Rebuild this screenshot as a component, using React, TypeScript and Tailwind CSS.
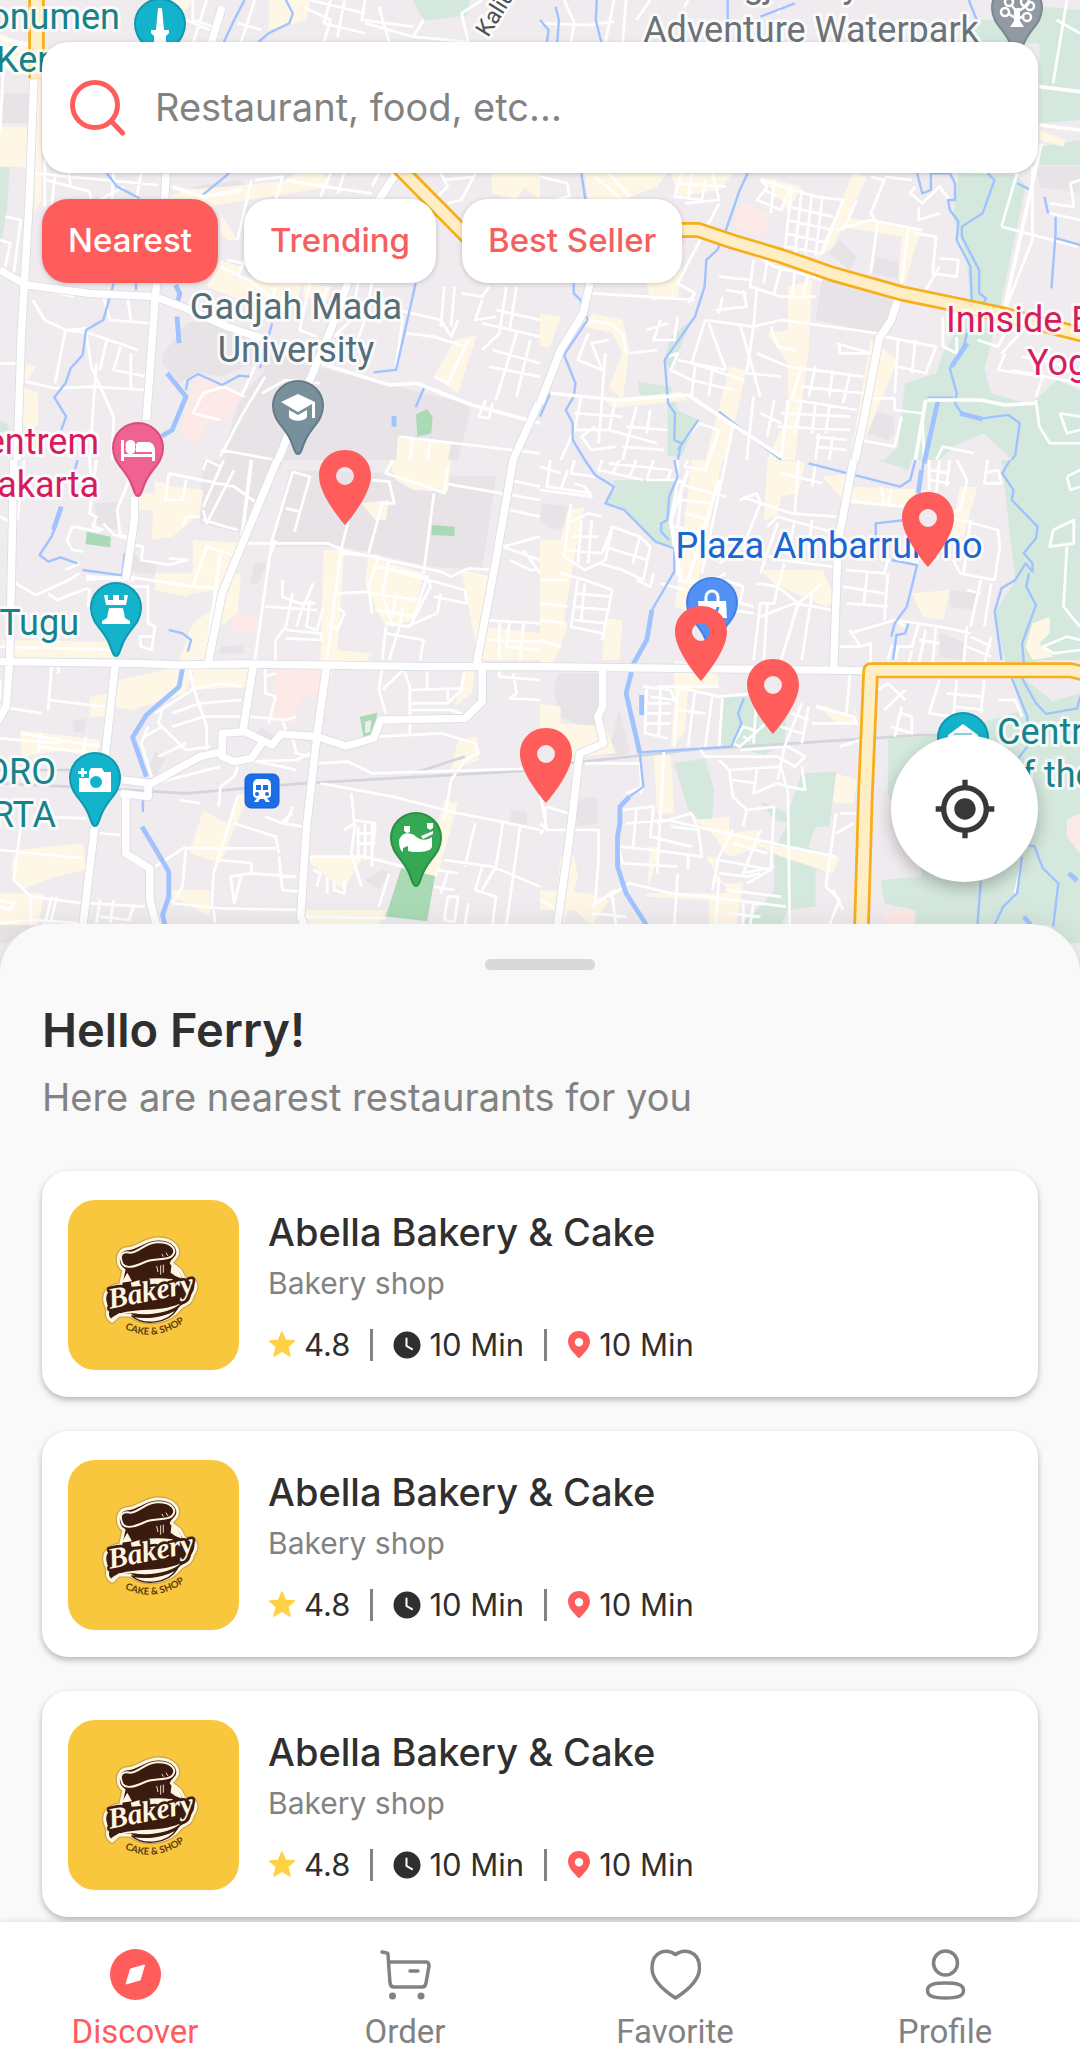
import { useState } from "react";
import { MdMyLocation } from "react-icons/md";

type Tile = {
  transform: string;
  green: string;
  grey: string;
  pink: string;
  park: string;
  cream: string;
  minor: string;
  street: string;
  road: string;
  water: string;
  river: string;
  rail: string;
  highway: string;
};

const TILES: Tile[] = [
  {
    transform: "scale(0.3444 0.3333)",
    green: "M0 500L28 495L20 640L0 740ZM1200 0H1365L1358 45L1235 62L1215 35ZM0 1260L25 1275V1290L0 1300Z",
    grey: "M540 970L620 960L720 1020L920 1100L1370 1215L1330 1380H640L700 1190L770 1110L740 1090L640 1130L570 1115L520 1150L470 1090L475 1060ZM0 280H90V370H0ZM560 560L690 540L720 560L600 600Z",
    pink: "M575 1130L700 1175V1190L665 1260L600 1270L580 1330L525 1310L545 1200Z",
    park: "M1208 1243L1240 1228L1256 1250L1252 1300L1212 1310Z",
    cream:
      "M0 380H85V500H0ZM490 590L540 570L820 545L860 520H940L960 560L600 620L490 640ZM640 780L700 800L680 830L880 840L860 920L700 900L600 860ZM780 0H900L890 60L780 90ZM0 100L60 130L130 150L122 240L0 200ZM1425 520H1568V600L1520 560L1500 600L1430 580ZM1500 690L1568 740V840L1520 820ZM1320 1020L1385 1005L1330 1180L1260 1130ZM75 1090L105 1100L65 1160L110 1180V1280H60ZM1155 1310L1310 1330L1300 1380H1150ZM450 0H560L520 60L470 40ZM640 640L690 720H660L640 700ZM100 240H120V600L100 640ZM880 850L960 860L950 900L880 890Z",
    minor:
      "M100 520L460 555M130 480V620M135 540L260 575L270 640M160 520L150 620M200 520L205 560M330 520L325 600M410 520L395 600M360 560L290 600M15 650L60 660L40 820M0 720L30 730L15 800M10 200L0 400M95 900L130 960L190 990L260 1000L400 1050M215 890L130 870M190 990L160 1150M75 1145L160 1165L270 1160L420 1170M250 1000L265 1100L330 1250L325 1380M300 890L320 960L440 970M310 1020L290 1110M370 890L380 960M350 1040L330 1110L430 1130M0 1090H60M380 1170V1060M540 60L610 90M560 130L600 0M560 0V60L620 80M690 70L760 90M740 0L700 126M880 20L960 60L940 126M900 0L1060 40M960 0L940 70L1060 100M1000 0L980 110M1060 0L1050 60L1200 80M1100 20L1130 126M1060 70L1200 110L1230 60M1200 110L1360 126M1400 0L1340 40L1360 126M730 540L690 720M740 540L820 530L800 600M830 540L940 560L1080 580M960 520L930 590M1000 520L980 580M1100 520L1080 560M1280 520L1300 560L1260 600M1290 540L1380 530M1380 520L1340 600L1300 610M640 800L720 840L800 900M720 760L690 830M660 780L760 800M800 860L780 940M900 850L870 990L920 1010M950 860L930 940M1040 850L1020 960L970 1010M1060 900H1110L1100 970M1080 850L1060 960L1030 1040M1110 920L1280 960L1310 1010L1330 960M1180 1000L1260 1010L1350 1040M1170 950L1150 1100M1290 860L1280 980M1320 860L1310 980M1340 880L1400 890L1420 860M1400 900L1380 960L1440 950M1470 860L1450 1000L1400 1050M1500 860L1480 990M1440 930L1568 960M1400 970L1568 1010M1500 1000L1440 1200M1540 1020L1500 1190M1430 1050L1568 1090M1420 1100L1568 1130M1360 1020L1300 1150L1260 1130M1410 1200L1390 1250L1420 1255L1430 1210M700 1190L740 1100M770 1130L700 1250L640 1370M560 1240L590 1180L650 1160L710 1190M560 1240L640 1260M640 1350L800 1380M760 1180L830 1140L930 1150M1160 1310L1568 1360M1200 1310L1190 1380M1250 1320L1240 1380M280 1090L260 1380M190 990L250 985",
    street: "M930 1090L1130 1155L1210 1150L1370 1215L1568 1270M500 560L590 590L700 570M0 115L130 145",
    road: "M98 240L85 600L62 1000L50 1380M0 810L75 855L260 880L450 890L540 925L660 980L760 1015M482 520L478 600M455 850L450 900L425 1260M1150 520L1100 600M1010 850L960 990L900 1140L800 1400M645 20L610 140M1568 1200L1485 1390",
    water:
      "M710 0L680 60L650 126M830 0L850 40L840 70L780 100L750 126M310 520L340 560L405 595M665 520L580 592M330 850L300 960L250 990L240 1065L205 1105L190 1150L158 1192L192 1250L178 1290M1207 850L1150 1110L1085 1117M1232 1162L1207 1222M540 1170L545 1140L575 1122L645 1155L695 1127L725 1130M790 970L755 1105M395 850V870",
    river: "M510 855L522 880L515 910M514 950L520 1030M485 1120L540 1190L500 1290L470 1308M1144 1248V1280",
    rail: "",
    highway: "M106 -10V235M1160 505L1380 735",
  },
  {
    transform: "translate(540 0) scale(0.3444 0.3333)",
    green:
      "M1260 60H1440L1460 20L1568 30V360L1450 370V130L1260 126ZM1215 520L1385 525L1410 560L1340 900L1290 1110L1310 1180L1410 1210L1440 1200L1500 1140L1568 1170V1380H1370L1290 1300L1200 1340L1160 1380H1000L1040 1340L1060 1150L1150 1120L1170 1060L1250 920L1240 780L1200 650ZM1450 440L1568 420V495H1450ZM440 960L380 1110L360 1080L380 1010ZM285 1145L380 1160L400 1230L460 1260L410 1370H370V1200L290 1185Z",
    grey: "M820 835L1040 890L1000 1005L800 960ZM870 720L920 770L900 810L840 760ZM975 770L1050 790L1045 840L965 820ZM950 1225L1025 1250L1030 1300L1010 1320L945 1300ZM1440 500H1568V580L1450 560Z",
    pink: "M590 605L665 645L650 710L555 680Z",
    park: "",
    cream:
      "M130 520H370L340 560L240 600H140ZM380 520H560L520 570L400 590ZM310 850L420 730L400 900H320ZM150 940L240 960L260 1050L240 1200L200 1160L240 1060L210 1000L130 980ZM190 1200L410 1175L430 1200L210 1225ZM910 520L950 530L900 640L850 740L800 780ZM880 650L1110 690L1090 740L1060 850L1040 840L1050 710L870 680ZM720 860L790 840L780 1050L740 1380H660L720 1240V1090L660 1000L720 990ZM550 1100L600 1110L540 1380H480ZM960 1020L1040 1080L1030 1100L920 1380H900ZM1450 390L1525 420L1520 440L1450 420ZM0 940L60 950L30 1040H0ZM640 530L760 560L720 640L700 600Z",
    minor:
      "M0 70L140 75L215 65M70 0L100 70L90 126M215 0L190 126M250 0L240 126M320 0L280 60M430 0L420 20M700 20L690 40M0 530L80 550L85 590L40 600M160 530L240 600M200 520L260 590M410 520L390 590L470 600L480 540M400 550L540 560M440 520L430 600M500 520L520 600L420 610M520 610L400 850M640 540L660 560L630 600L700 630L730 560M650 570L690 590M680 540L670 640M640 540L800 590L880 600M730 570L710 760M760 570L740 760M790 580L770 760M820 590L800 770M720 620L850 650M715 660L850 690M712 700L840 730M712 740L820 760M880 600L820 760M860 690L960 660L1110 690M920 600L880 690M960 530L1000 540L960 640L980 670L960 820M1000 530L1080 540M1090 560L1075 580L1110 610L1160 560L1190 600M1100 620V660L1160 640M1070 680L1050 850M1090 700L1150 710L1140 820L1210 830L1215 780L1160 775M1120 870L1160 800M600 750L680 800L790 830L820 840M620 780L610 860L700 890L800 890M660 780L650 850M700 800L680 880M740 820L730 900M780 820L760 900M520 830L610 840M540 870L600 880M510 930L600 920L590 870M530 890L520 940M150 880L310 890L450 900M400 850L450 880L430 910M350 960L330 1020L390 1020L400 950M310 990L370 970M480 960L440 1090L530 1120L590 1140M480 960L620 980L700 960L980 1000M490 970L540 1110M580 970L640 1190M620 980L600 1120L700 1130M630 860L620 980M670 980L690 1040L740 1050M630 1060L720 1100L940 1130M760 1100L730 1200M800 1100L780 1190M850 1110L840 1190M900 1120L880 1210M760 1160L940 1180M740 1200L920 1230M860 1030L960 1060L870 1060V1030M1000 1010L1150 1040L1120 1120L1040 1100M1040 1020L1030 1180M1090 1020L1080 1120M1170 950V1040L1210 1060V1010M1270 1020L1330 1040L1350 1000M1350 1060L1330 1110L1460 1130L1440 1190M1400 1070L1540 1100M1370 1110L1568 1150M1440 950L1340 1060M140 1000L110 1080L180 1110L150 1030L200 1020M190 1060L180 1190M260 1060L340 1050M250 1060L240 1000L200 970L130 960M370 1070L400 1060L380 1110L440 1140L560 1170M400 1080L540 1110M450 1100L440 1190M500 1110L490 1190M120 1190L100 1290L60 1380M180 1200L170 1330M220 1200L200 1290L340 1330M100 1240L240 1250M100 1290L200 1290M160 1280L120 1310L150 1350L220 1340M280 1220L240 1380M320 1230L310 1300M250 1280L370 1290M240 1340L360 1350M420 1320L460 1270L520 1290L490 1380M560 1280L540 1380M620 1190L600 1380M680 1200L660 1310M720 1200L700 1380M640 1240L700 1270M760 1200L740 1300M800 1210L790 1300M840 1220L830 1300M700 1240L900 1250M690 1280L900 1290M800 1310L890 1320M800 1340L890 1350M800 1380L810 1300M840 1380L850 1310M1030 1195H960M1030 1195V1230L1110 1240L1115 1380M1050 1250L1030 1340L930 1320M1340 680L1560 740M1385 520L1340 680M1430 500L1430 720L1350 930M1568 540L1540 550L1550 620L1480 610M1568 660L1480 640M1440 1200L1450 1280L1480 1330H1568M1510 1240L1530 1300L1568 1290M1510 1240L1568 1250M1150 1380L1170 1340L1260 1360M1490 250L1530 0M1500 60L1568 100",
    street: "M1450 260L1568 275M1450 375L1568 390M1455 430L1350 920M1120 1200L1090 1380M30 1180L230 1200L430 1185L700 1370M1125 1200L1280 1200L1350 1215L1440 1210",
    road: "M145 850L125 940L60 1050L0 1210M1040 895L1020 960L985 1015L960 1150L940 1260L913 1390",
    water:
      "M0 60L25 90L20 126M45 20L55 60L50 126M165 0L162 60L178 126M545 0V126M740 10L640 50M1245 0L1268 60L1230 110M120 520L132 600M603 520L580 570L540 690L515 750L483 780L478 860L450 950L362 1080L372 1210L392 1240L390 1320L410 1330L400 1380M460 1260L400 1350M98 850V880L118 900L138 960L70 1065L103 1150L98 1190L75 1230L95 1270V1320L130 1380M0 1250L30 1180M520 1235L700 1380M1095 520L1110 580L1135 570V520H1190L1205 550V600H1185L1190 630L1215 665L1210 720L1250 800L1255 940L1230 1040L1190 1105L1210 1180L1205 1210L1230 1250M1285 1255L1360 1245L1393 1270L1380 1365L1370 1380M1300 520L1320 540L1285 640L1225 680V710L1275 810V880L1295 895L1280 930M1385 550L1425 570M1465 590L1475 640M1497 650V700L1485 865M1500 715L1568 735M1125 1193H1200",
    river: "M1155 1205L1115 1390M1220 1240L1285 1258M1240 1030L1195 1100",
    rail: "",
    highway: "M360 690L460 690L560 725L700 768L850 822L1050 880L1330 940L1580 1005",
  },
  {
    transform: "translate(0 460) scale(0.3444 0.3333)",
    green: "",
    grey: "M590 0H790L700 220L580 190ZM840 30L1440 50L1400 330L1250 320L1000 260H790ZM275 130L345 125L340 210L280 190ZM385 280L455 320L450 345L385 335ZM740 305L775 310L750 370L725 375ZM640 560L710 555V580H635ZM210 780L250 775L245 820L215 815ZM1485 1050L1530 1055V1095L1480 1090ZM1060 1260L1110 1230L1130 1240L1100 1290ZM450 870L480 900L450 950L430 930ZM760 800L800 830L780 850L740 830ZM0 1390H110L20 1450H0Z",
    pink: "M680 458L750 470L745 525L670 505ZM800 628H935L925 715L870 710L860 790L780 780L800 700L790 690Z",
    park: "M252 215L322 230L320 262L248 252ZM1255 195L1320 200V228L1252 225ZM1165 1225L1263 1248L1240 1384L1120 1370ZM1045 770L1095 758L1085 830H1055ZM1060 785V820L1075 815L1078 780Z",
    cream:
      "M450 60L500 80L590 90L580 160L500 230L440 240L445 150L390 150V100H450ZM560 240L720 250L640 390L560 400L540 410L450 390V340H560ZM650 340L700 340L690 460L640 500L600 600H520L560 490L640 430ZM0 540L330 545V600H40ZM940 270H1000L980 570L1080 580L1060 610H930ZM1070 290L1230 340L1200 480L1120 500L1080 420L1060 370ZM1130 0H1310L1300 95L1200 90L1150 60ZM1340 330L1430 350L1400 500L1568 520V600H1390ZM345 660L520 620L560 630L540 700L380 750L330 740ZM560 620H720L715 680L560 690ZM60 810L290 840L280 900L190 870L60 890ZM260 710L320 700L310 770H260ZM590 1050L660 1090L690 1000L720 1010L640 1210L550 1180ZM50 1170L240 1150L250 1230L160 1250L60 1290L30 1220ZM1290 1020L1330 1030L1270 1250H1230ZM900 1100V1190H1060L1030 1230L1000 1290L900 1210ZM890 1350H1120L1100 1395H880ZM500 1290H610V1370L500 1310ZM0 1300H130L110 1395H0ZM1330 840L1385 830L1390 900L1310 930ZM940 620H965L930 830H915ZM1350 620H1380L1370 700L1320 740ZM1050 130L1130 120L1120 180H1090Z",
    minor:
      "M0 170L40 190M70 0L50 180M280 0L260 160L280 170L270 200L300 210M350 0L375 60L340 150L350 230L375 235M300 190L330 225L380 230M210 200L195 240L210 270L240 275M210 200L290 215M260 0L270 120M490 40L680 80L740 125M490 40L480 120L530 120L540 60M680 30L600 190L590 150M650 0L590 140M590 180L690 210M530 200L540 170L580 170M600 0L640 20L620 70M390 255L415 260L410 300L490 315L545 300L490 295M850 35L790 240L740 600M850 35L900 50L855 215M830 145L870 155M800 240L780 300M700 250H950L1010 275L1280 335L1310 350L1360 325L1440 330M1080 60L1130 65L1145 130L1110 130L1070 280M1020 150L990 270L950 600M990 280L1100 290L1090 320L1240 350L1200 480M1100 290L1070 380L1080 460M1130 300L1110 400L1140 500M1100 320L1350 390L1355 430L1260 410M1240 350L1250 380L1190 500L1120 490M1080 400L1210 420M1090 450L1210 470M1150 400L1140 470M1170 440L1160 500L1130 600M1120 500L1110 600M1180 500L1270 460M1270 460L1280 400M1120 520L1230 540L1220 600M980 400L1080 395M980 440L1000 460L980 510L950 490M820 360V410L870 430L915 430M910 370L880 440L860 500M770 440L920 450M850 400L830 500L800 540V600M900 420L890 500L920 510L940 440M830 510L930 520L935 540L830 535M1260 100L1230 340M1300 20L1290 100L1240 80L1120 40L1140 0M1290 70L1568 120M1480 60L1568 80M1480 150L1568 170M1460 260L1568 230M1460 260L1568 300M1520 270L1568 340M1480 300L1540 330L1568 330M1400 480L1568 490M1450 490V600M1480 480L1470 560L1568 570M1520 490L1510 600M1420 540L1568 545M45 370L105 405L200 360L230 340M140 400L165 420L255 385M190 330L230 310M250 360L370 350L560 380L640 385M370 380H430V490L450 500L440 570L410 560L405 530L440 530M560 380L600 260L690 290M600 0L590 30M260 385L255 440M0 560L330 570M0 660V720M150 620L140 750M0 740L120 760M145 720L300 740M60 820L290 860M0 835L180 850M120 820L110 880M250 830L240 900M110 860L270 880M170 620V640M550 620L560 680L600 800V870M550 690L640 670L700 680M560 690L450 760M470 750L460 790L540 870L610 860M500 760L580 730L700 720M500 800L590 770L700 770M430 800L410 850L440 950M420 830L470 800M460 890L540 850M770 620V700L800 710L780 790M770 650L800 640M720 770L830 780L860 770M820 780L830 810M1110 620L1100 690L1120 760M1170 620L1190 680V820M1180 620L1110 690M1190 690L1340 685M1240 620V690M1350 620L1340 690L1300 730H1195M1190 750H1310L1360 770M1300 690V720M1450 620V650L1568 660M1490 640L1500 700L1480 715L1568 720M850 830L860 880L910 890M700 905L860 900L900 880M730 900L860 930M690 920L680 950L640 980L635 1040M640 920L450 970M920 910L1010 905L1080 940L1568 925M1100 830L1280 820L1380 850L1390 880L1350 900L1310 960L1290 1080M930 970L1140 1010L1330 1060L1480 1090L1568 1110M1020 1000L1030 1100L1020 1180L1050 1280M1030 1080L1090 1090L1080 1180M1040 1100V1200M1060 1090V1200M1080 1090V1220M1035 1120H1090M1035 1150H1090M900 1190H1060L1170 1220M1000 1110L1030 1090M910 1230L930 1240L920 1280M950 1250V1300M970 1260V1290L1000 1300V1260M810 1190L820 1290L870 1295M770 1070L820 1090L880 1100M820 1085L850 1060M850 1040L830 1090M680 1090L800 1130L810 1180M520 1020L580 1030M690 1010L620 1240L615 1350M540 1165H800M540 1165L530 1280L500 1330M640 1200L730 1210V1240L670 1250L680 1330L700 1250M720 1240L860 1250M450 1220L540 1160M500 1330L640 1345L865 1350M620 1350L625 1390M0 1170L240 1195M60 1100L40 1260L90 1310L240 1330M150 1310L130 1395M165 1310L145 1395M290 1320L280 1390M330 1320L320 1390M390 1330L375 1380L290 1370M260 1330L420 1340M0 1390L90 1380L240 1390M90 1310V1395M0 1320L40 1330L30 1350L0 1340M100 1070L250 1075M290 1120L350 1125M1290 1200L1430 1220L1568 1280M1270 1230L1330 1240M1260 1280L1320 1290M1300 1240L1280 1300M1400 1220L1380 1290L1440 1310L1430 1395M1440 1220L1400 1290M1490 1250L1470 1395M1300 1310L1290 1380L1320 1385L1330 1310L1300 1310M1360 1330L1350 1395M870 1370L1120 1375M1380 1090L1350 1220M1460 1090L1440 1220M1510 1100L1490 1250M1100 1340L1130 1240",
    street: "M730 0L700 250M640 280L600 600M390 360L250 350",
    road: "M0 605L400 610L520 615L700 612L930 615L1240 620H1580M40 0L28 600L18 740L-10 790M390 110V180L365 360M335 610L305 890M275 1100L240 1400M805 0L700 260L645 400L605 605M735 620L705 815M1490 0L1440 300L1385 605L1400 625V725L1350 775L1105 780L1085 835L1005 858L920 830L815 822L790 855L710 815L645 820V890L680 905L730 895L760 850M645 875L580 890L440 970L355 960M350 1000L430 1010V970M365 1000V1180L435 1225V1320L455 1400M948 620L920 830L890 1100L873 1370L885 1400",
    water: "M180 140L150 230L115 285L140 305L175 292L225 310M240 330L355 346L362 280M490 510L530 520L555 540L545 575M415 1020V1055M225 0L215 40",
    river: "M178 140L155 210M530 625L520 680L425 765L385 832L425 950M412 1100L450 1165L490 1235V1310L472 1365L480 1400",
    rail: "M0 930H250M0 970L200 980L540 1000L880 970L1568 930M1200 940L1350 890",
    highway: "",
  },
  {
    transform: "translate(540 460) scale(0.3444 0.3333)",
    green:
      "M210 60L400 60L370 180L390 265L335 245L245 150L190 130L220 85ZM530 710L720 710L710 850L650 885L560 860H525ZM390 910L480 895L505 990L500 1080L470 1085L430 1050ZM640 1025L720 1060L760 940L860 935L840 1100H800L780 1160L850 1200L800 1230L800 1340L720 1350L700 1395H580L650 1330L680 1290L680 1170L720 1090L680 1080ZM1010 835L1160 825L1568 700V1450H1530L1480 1395H1090V1350L1000 1330L990 1260L1110 1250L1100 1200L1010 1000ZM1340 0H1568V600H1450L1400 650L1530 760L1568 740V900H1430L1410 780L1350 600L1320 460L1380 360ZM980 0H1080L1070 30Z",
    grey: "M5 130L85 140L90 190L40 210L0 180ZM50 640H180V740L165 770L185 850L200 870L230 750L260 870L240 890L130 880L100 790L60 770L40 700ZM1160 520L1240 550L1230 600L1160 590ZM1190 390L1270 400L1260 450L1190 440ZM100 1020L165 1010L170 1090L110 1100Z",
    pink: "M1000 1352L1088 1350L1080 1395H1000ZM1530 1080L1568 1060V1180L1530 1130Z",
    park: "",
    cream:
      "M80 150L130 140L110 230L70 470L80 500L40 610H0V240H60ZM440 0H530L440 460L390 440L400 380ZM660 0L770 5L750 100L700 110L690 170L650 180ZM820 50L920 40L900 80L1130 90V150L890 130ZM1220 80H1270L1230 230L1190 240ZM640 330H820L860 420L830 440L740 400L680 370ZM190 475L240 480L230 600H180ZM390 600L510 620L520 680L430 690L420 820L380 860L390 700ZM0 730L60 740V790L190 800L220 880L120 890L100 1000L90 870L0 800ZM800 730L920 770L910 720L920 790H860ZM330 880L380 890L390 1060L340 1060ZM450 1080L550 1070L550 1120L630 1110L640 1150L870 1190L850 1240L700 1190L640 1160L550 1190L530 1170L510 1130ZM320 1160L350 1160L310 1300H550L480 1190H520L500 1270H590L570 1395H490L490 1320L310 1310ZM60 1190H100L110 1250L70 1390H40ZM0 1290L140 1300L200 1320L150 1395L100 1350H0ZM860 940L920 960L910 1030H850ZM1480 470L1430 490L1410 560L1430 600L1490 590L1450 550L1480 520ZM1080 400L1190 390L1170 480L1110 470Z",
    minor:
      "M0 20L60 40M30 0L20 80L150 100M80 30L60 90M0 90L150 110L130 80L100 70M100 0L90 40L160 50M180 0L170 30L300 60M230 0L210 40M280 0L260 50M330 0L310 60M200 10L380 30M310 60L400 60L430 80L540 110M380 30L370 60M400 0V60M430 0L420 20L480 30L490 0M540 0L470 340M400 60L380 180L400 350M410 120L500 130M420 160L490 180M390 200L480 220M410 100L400 200M90 130L70 290L130 330L190 300L210 200L290 230L320 260L300 360L240 330L170 310M80 190L140 160L180 170M90 230L170 230M75 270L180 280M120 180L110 310M150 180L140 310M210 200L180 280M290 230L270 310M190 260L310 300M330 340L320 380L280 360M350 370L420 390M60 340L130 360L210 390M100 400L210 410M110 360L90 500L180 520M130 370L120 480M100 440L200 450M210 390L180 540M100 480L190 490M0 430L80 440M0 480L70 490M0 540L60 560M0 360H80M580 120L630 100L640 130L590 110M640 130L730 160L860 170M640 130L590 260L520 310M750 0L740 160M800 10L790 80M820 70L700 40M660 200L690 170L860 220M740 180L720 280M790 180L780 270M690 190L640 340M580 260L700 300L850 320M540 340L480 370L500 420M540 360L590 380L580 430M630 370L690 380L680 430L640 430L620 600M710 310L690 380L750 430L700 600M750 430L820 370M740 430L850 450M790 400L760 600M640 470L740 430M660 430L650 600M550 420L620 440M560 450L620 460M900 0L890 120L960 130L1060 140M990 80L1000 130M1020 90L1010 130M1130 0V90M1160 0L1150 100M1190 0L1180 80M1130 30L1190 40M1130 60L1190 70M1300 0L1290 70H1340L1330 30L1290 40M1210 0L1240 60L1220 150L1190 160M890 330L1000 340L1010 300L1100 310M880 380L1000 400M890 430L1010 440M950 340L940 430M1010 340L1000 480M900 520L1030 480L1160 500L1250 520M1030 480L1060 500M900 510L930 560L960 550V610M870 560H930M1190 170L1220 180L1330 210L1335 260L1320 360L1220 340L1200 300M1250 180L1230 340M1280 360L1250 500M1310 370L1290 500M1280 400L1240 390M1240 500L1230 610M1310 530L1290 610M1250 530L1310 560M1240 560L1310 590M1100 490L1080 560L1020 560L1010 600M1040 560L1030 600M1080 570L1070 610M1120 510L1100 610M1150 500L1140 610M1100 540L1160 550M300 680L380 690L390 720L320 710M310 680L305 820L370 835M350 690L345 830M310 730H380M310 760H380M310 790H380M390 680L520 710L620 700M400 690L390 860M450 690L430 860M500 710L480 860M530 710L520 860M400 750L480 760M340 680L520 680M630 700L620 850M710 740L580 860L560 850L590 800L620 810M590 830L610 840M760 730L710 860L690 960M780 740L760 850M800 740L910 770L920 790H790M700 800L760 820M730 760L780 780M900 640L890 760M870 860L930 840M980 690L1010 670L1060 720M1000 750L1060 690M1050 740L1030 830M1020 800L1080 820V770L1050 760M1160 660L1130 760L1200 770L1210 660M1180 700L1280 710M1200 740L1290 750M1290 660L1280 760M1330 720H1380L1400 770M460 860L480 890L690 890L740 920L770 890L720 860L580 870M520 900L550 930L560 1010L600 1050L680 1040M550 930L700 920L720 1000L725 1395M630 930L620 1000L690 970L720 980L770 990L760 920M560 960L630 970M600 1050L590 1100M680 1040L670 1230L600 1270M240 1050L330 1040L320 1130L440 1160M280 1050L270 1160M230 1160L330 1170L470 1190L460 1110L440 1060L340 1090M360 870L340 1240M250 1000L300 980L290 1000M230 1170L240 1210L400 1220M250 1090L370 1080L500 1110L720 1160L860 1190M430 1180L430 1230M380 1100L460 1110M560 1110L520 1190L500 1290M640 1110L590 1240L680 1220M560 1150L660 1180M520 1200L670 1230M520 1240L600 1250L640 1240M200 1310L260 1270L380 1300L480 1310L715 1340M400 1240L390 1395M150 1340L220 1290M210 1310L220 1395M150 1360L250 1370M520 1250L510 1395M590 1320V1395M620 1330L610 1395M540 1290L700 1310M550 1360L640 1370M860 1060L830 1280L870 1320L840 1395M870 1060H920M860 1120L910 1090M850 1290L880 1350M0 1090L20 1110H170V1200L160 1330M0 1320L50 1350M20 1040L80 1060M15 1040V1100M130 910H290L295 980M0 1000L20 1110M1530 50L1568 30M1530 50L1540 90L1568 80M1490 210L1550 180V250L1480 260L1490 210M1530 260L1520 440L1568 500M1460 560L1530 530L1568 540M1460 560L1490 580L1568 570M1400 1200L1380 1300",
    street: "M430 30L380 180L410 360M520 60L430 360M400 360L480 370M0 1120L10 1110",
    road: "M0 620L400 625L940 632M910 0L865 250L853 620M182 630V740L168 770L185 850L115 880L90 1100L50 1400",
    water:
      "M130 0L160 45L215 80L190 130L245 150L335 245L390 265V335L325 450M390 0L400 50L375 110L370 180L352 190V215L375 240M1090 0L1075 60L1045 80L780 10M1115 0L1100 90M1060 180L975 190V250M1020 300L1095 315L1065 440L1030 490L1020 530M1070 490L1060 520L1035 525L1025 600M1365 0L1342 40L1375 90L1370 120L1445 200L1440 235L1405 280L1430 310V335L1410 310L1380 360L1340 385L1320 455L1340 600M1420 340L1412 380L1440 435L1400 550L1405 610M1370 655L1415 770V860L1370 920M1400 655L1440 730L1470 762L1560 745L1568 710M592 715L575 760L585 790L555 860L290 877M1420 1158H1435L1460 1225L1505 1270L1490 1400M1400 1190L1385 1300L1345 1340L1320 1395M1280 1265L1270 1395M290 880L300 980L260 1010",
    river: "M325 450L310 540L272 610L250 700L290 880M260 1010L232 1040V1090L225 1130V1220L250 1300L312 1400M295 705V765M1405 1370L1425 1395M1535 1240L1560 1262M1108 30L1098 100",
    rail: "M0 915L130 905L440 870L960 835L1100 825H1160",
    highway: "M1600 645L1540 631H960L945 1000L933 1420",
  },
];

function MapTile({ tile }: { tile: Tile }) {
  return (
    <g transform={tile.transform} fill="none" strokeLinejoin="round">
      <path d={tile.green} fill="#d5e8dd" />
      <path d={tile.grey} fill="#e7e3e7" />
      <path d={tile.pink} fill="#fde9e8" />
      <path d={tile.cream} fill="#fff7e5" />
      <path d={tile.park} fill="#a9dab5" />
      <path d={tile.rail} stroke="#d3d5dd" strokeWidth="8" />
      <path d={tile.minor} stroke="#ffffff" strokeWidth="8" />
      <path d={tile.water} stroke="#a0c3ff" strokeWidth="7" />
      <path d={tile.river} stroke="#a0c3ff" strokeWidth="14" />
      <path d={tile.street} stroke="#ffffff" strokeWidth="11" />
      <path d={tile.road} stroke="#dcdee5" strokeWidth="27" />
      <path d={tile.road} stroke="#ffffff" strokeWidth="22" />
    </g>
  );
}

function Highway({ tile }: { tile: Tile }) {
  return (
    <g transform={tile.transform} fill="none" strokeLinejoin="round">
      <path d={tile.highway} stroke="#f7ae1a" strokeWidth="48" />
      <path d={tile.highway} stroke="#ffeec5" strokeWidth="32" />
    </g>
  );
}

function PlacePin({ x, y, fill, edge, children }: { x: number; y: number; fill: string; edge: string; children: React.ReactNode }) {
  return (
    <g transform={`translate(${x} ${y})`}>
      <path
        d="M0 48C-3 48-4 42-7 35C-13 21-25 15-25 0A25 25 0 1 1 25 0C25 15 13 21 7 35C4 42 3 48 0 48Z"
        fill={fill}
        stroke={edge}
        strokeWidth="2"
      />
      {children}
    </g>
  );
}

const LABELS = [
  { x: 120, y: 29, text: "onumen", color: "#16838c", anchor: "end" },
  { x: -4, y: 72, text: "Ken", color: "#16838c", anchor: "start" },
  { x: 703, y: -3, text: "Jogja Bay Pirates", color: "#6b7378", anchor: "start" },
  { x: 811, y: 42, text: "Adventure Waterpark", color: "#6b7378", anchor: "middle" },
  { x: 296, y: 319, text: "Gadjah Mada", color: "#546e7a", anchor: "middle" },
  { x: 296, y: 362, text: "University", color: "#546e7a", anchor: "middle" },
  { x: 99, y: 454, text: "entrem", color: "#d81b60", anchor: "end" },
  { x: 99, y: 497, text: "akarta", color: "#d81b60", anchor: "end" },
  { x: 946, y: 332, text: "Innside By", color: "#d81b60", anchor: "start" },
  { x: 1027, y: 375, text: "Yogya", color: "#d81b60", anchor: "start" },
  { x: 829, y: 558, text: "Plaza Ambarrukmo", color: "#1967d2", anchor: "middle" },
  { x: 79, y: 635, text: "Tugu", color: "#16838c", anchor: "end" },
  { x: 56, y: 784, text: "ORO", color: "#16838c", anchor: "end" },
  { x: 56, y: 827, text: "RTA", color: "#16838c", anchor: "end" },
  { x: 997, y: 744, text: "Central", color: "#16838c", anchor: "start" },
  { x: 1002, y: 787, text: "of the", color: "#16838c", anchor: "start" },
] as const;

const RESTAURANT_PINS = [
  { x: 345, y: 450 },
  { x: 928, y: 492 },
  { x: 701, y: 606 },
  { x: 773, y: 659 },
  { x: 546, y: 728 },
];

function CityMap() {
  return (
    <svg viewBox="0 0 1080 974" className="block w-full" role="img" aria-label="Map of restaurants near you">
      <rect width="1080" height="974" fill="#efebef" />
      {TILES.map((tile) => (
        <MapTile key={tile.transform} tile={tile} />
      ))}
      {TILES.map((tile) => (
        <Highway key={tile.transform} tile={tile} />
      ))}

      <g fontFamily="Roboto, 'Liberation Sans', sans-serif" fontSize="36" stroke="#ffffff" strokeOpacity="0.75" strokeWidth="6" strokeLinejoin="round" paintOrder="stroke">
        {LABELS.map((l) => (
          <text key={l.text} x={l.x} y={l.y} fill={l.color} textAnchor={l.anchor}>
            {l.text}
          </text>
        ))}
        <text transform="translate(488 38) rotate(-58)" fontSize="23" fill="#4d5156">
          Kaliurang
        </text>
      </g>

      <PlacePin x={160} y={24} fill="#14b3cc" edge="#0f98ae">
        <path d="M-2-16H2L4 6H9V9L6 12V18H-6V12L-9 9V6H-4Z" fill="#fff" />
      </PlacePin>
      <PlacePin x={1017} y={8} fill="#9199a3" edge="#7d858f">
        <g fill="none" stroke="#fff" strokeWidth="2.5">
          <circle cx="-12" cy="4" r="4" />
          <circle cx="-8" cy="-6" r="4" />
          <circle cx="8" cy="-6" r="4" />
          <circle cx="13" cy="-2" r="4" />
          <circle cx="10" cy="9" r="4" />
          <path d="M-8 6L0 11L7 8M-5-2L0 4L8-1" />
        </g>
        <path d="M-3 0H3V13L7 19H-7L-3 13Z" fill="#fff" />
      </PlacePin>
      <PlacePin x={298} y={406} fill="#78909c" edge="#647b87">
        <path d="M-17-4L0-12L17-4V12H14V-2L0 6ZM-9 4L0 9L9 4V11C6 16-6 16-9 11Z" fill="#fff" />
      </PlacePin>
      <PlacePin x={138} y={448} fill="#f06292" edge="#d94c7d">
        <path d="M-17-8H-14V6H14V2H17V13H14V9H-14V13H-17ZM-12-1A5 5 0 1 1-3-1A5 5 0 1 1-12-1ZM-2 4V-4L0-6H11C15-5 17-2 17 4Z" fill="#fff" />
      </PlacePin>
      <PlacePin x={116} y={608} fill="#14b3cc" edge="#0f98ae">
        <path d="M-12-13H-8V-8H-3V-13H3V-8H8V-13H12L10-3H-10ZM-7 0H7L9 10L14 13V16H-14V13L-9 10Z" fill="#fff" />
      </PlacePin>
      <PlacePin x={95} y={778} fill="#14b3cc" edge="#0f98ae">
        <path d="M-16 0H-6V-6L-4-10H7L9-6H16V14H-16Z M-14-10H-11V-7H-8V-4H-11V-1H-14V-4H-17V-7H-14Z" fill="#fff" />
        <circle cx="1" cy="4" r="6" fill="#14b3cc" />
      </PlacePin>
      <PlacePin x={416} y={838} fill="#34a853" edge="#2a8f45">
        <path d="M-17 2C-14-6-7-6-2-3C5 3 10 3 16-1V9C14 14 4 14-3 14L-8 13V8L-13 10V14C-16 12-17 8-17 2ZM-12-12H-6V-6L-9-5L-12-7ZM11-15H17V-10L14-8L11-10ZM5-2L17-7V-4L7 1Z" fill="#fff" />
      </PlacePin>
      <PlacePin x={712} y={603} fill="#5491f5" edge="#4380e6">
        <path d="M-14-2H14L15 15H-12Z" fill="#fff" />
        <path d="M-6 0V-6A6 6 0 0 1 6-6V0" fill="none" stroke="#fff" strokeWidth="3" />
        <path d="M-6 4C-4 12 5 12 6 4" fill="none" stroke="#5491f5" strokeWidth="3" />
      </PlacePin>
      <PlacePin x={963} y={738} fill="#14b3cc" edge="#0f98ae">
        <path d="M0-14L15-3V0H-15V-3Z" fill="#fff" />
        <path d="M-9-4H9" stroke="#14b3cc" strokeWidth="1" />
      </PlacePin>

      <g transform="translate(245 774)">
        <rect width="34" height="34" rx="6" fill="#1b6ee6" stroke="#165cc4" />
        <path d="M12 5H22C25 6 26 8 26 11V20C26 23 24 24 22 24L25 28H21L19 25H15L13 28H9L12 24C10 24 8 23 8 20V11C8 8 9 6 12 5Z" fill="#fff" />
        <path d="M11 11H16V16H11ZM18 11H23V16H18Z" fill="#1b6ee6" />
        <circle cx="12" cy="20" r="2" fill="#1b6ee6" />
        <circle cx="22" cy="20" r="2" fill="#1b6ee6" />
      </g>

      {RESTAURANT_PINS.map((p) => (
        <path
          key={p.x}
          transform={`translate(${p.x} ${p.y})`}
          fill="#ff5c5c"
          fillRule="evenodd"
          d="M0 0C-15 0-26 11-26 26C-26 46 0 75 0 75S26 46 26 26C26 11 15 0 0 0ZM0 35A9 9 0 1 1 0 17A9 9 0 1 1 0 35Z"
        />
      ))}
    </svg>
  );
}

function BakeryLogo() {
  return (
    <svg viewBox="0 0 171 170" className="h-[170px] w-[171px] shrink-0 rounded-[27px] bg-[#f8c73e]" role="img" aria-label="Bakery cake and shop logo">
      <g transform="translate(22 20) scale(0.3333)" strokeLinejoin="round" fill="none">
        <path
          d="M102 150C78 138 78 88 112 86C140 86 160 60 200 57C255 55 275 92 256 114C250 122 244 124 244 130L270 150L284 178C320 170 325 200 308 225C300 260 280 250 270 265C240 305 170 320 120 285L88 284L66 304C40 285 62 275 48 255C35 220 55 200 92 195Z"
          fill="#fff6df"
          stroke="#cba24a"
          strokeWidth="16"
        />
        <path
          d="M102 150C78 138 78 88 112 86C140 86 160 60 200 57C255 55 275 92 256 114C250 122 244 124 244 130L270 150L284 178C320 170 325 200 308 225C300 260 280 250 270 265C240 305 170 320 120 285L88 284L66 304C40 285 62 275 48 255C35 220 55 200 92 195Z"
          fill="#3b1b10"
          stroke="#fff6df"
          strokeWidth="9"
        />
        <path d="M98 132C84 102 98 94 122 98C150 95 165 69 200 67C248 65 262 92 246 108C232 122 195 114 165 126C140 138 110 150 98 132Z" fill="#3b1b10" stroke="#fff6df" strokeWidth="6" />
        <path d="M245 130C262 142 272 158 276 176L256 168L242 158Z" fill="#fff6df" />
        <path d="M112 158L126 184L94 188Z" fill="#fff6df" />
        <path d="M122 188C160 174 205 172 248 178L248 190L125 200Z" fill="#fff6df" />
        <path d="M200 138L204 156M212 136V164M220 134V158M216 102L220 110M228 98L234 108" stroke="#f3dfc9" strokeWidth="3" />
        <path d="M125 288C170 298 225 290 262 266C235 312 160 318 125 288Z" fill="#fff6df" stroke="#3b1b10" strokeWidth="4" />
        <path d="M64 294C118 256 200 284 272 250C252 272 190 290 130 280C100 278 80 286 64 300Z" fill="#fff6df" />
        <text
          x="60"
          y="266"
          transform="rotate(-11 60 266)"
          fontFamily="'Liberation Serif', serif"
          fontStyle="italic"
          fontWeight="700"
          fontSize="88"
          fill="#fff6df"
          stroke="#3b1b10"
          strokeWidth="16"
          paintOrder="stroke"
        >
          Bakery
        </text>
        <path id="logo-arc" d="M104 326Q190 370 282 308" />
        <text fontFamily="Lato, sans-serif" fontWeight="700" fontSize="29" fill="#5a3a14">
          <textPath href="#logo-arc">CAKE &amp; SHOP</textPath>
        </text>
      </g>
    </svg>
  );
}

const StarIcon = () => (
  <svg viewBox="0 0 28 28" className="size-7 shrink-0" aria-hidden="true">
    <path d="M14 1L17.500 9.200L26.500 10L19.700 15.800L22 25L14 20.200L6 25L8.300 15.800L1.500 10L10.500 9.200Z" fill="#ffd144" stroke="#ffd144" strokeWidth="1.500" strokeLinejoin="round" />
  </svg>
);

const ClockIcon = () => (
  <svg viewBox="0 0 28 28" className="size-7 shrink-0" aria-hidden="true">
    <circle cx="14" cy="14" r="13.5" fill="#2f2f2f" />
    <path d="M13.500 7.500V15L19 18.200" fill="none" stroke="#fff" strokeWidth="2" strokeLinecap="round" />
  </svg>
);

const SmallPin = () => (
  <svg viewBox="0 0 24 28" className="h-7 w-6 shrink-0" aria-hidden="true">
    <path d="M12 0C5.500 0 1 4.500 1 10.500C1 17 7 22 10.500 26Q12 28 13.500 26C17 22 23 17 23 10.500C23 4.500 18.500 0 12 0ZM12 7A4.200 4.200 0 1 1 12 15.400A4.200 4.200 0 1 1 12 7Z" fill="#ff5c5c" fillRule="evenodd" />
  </svg>
);

function RestaurantCard({ name, kind, rating, time, distance }: { name: string; kind: string; rating: string; time: string; distance: string }) {
  return (
    <li className="flex rounded-[26px] bg-white pt-[29px] pr-[26px] pb-[27px] pl-[26px] shadow-[0_3px_6px_rgba(0,0,0,0.27)]">
      <BakeryLogo />
      <div className="ml-[29px] pt-2">
        <h2 className="text-[38px] leading-[48px] font-medium text-[#2f2f2f]">{name}</h2>
        <p className="mt-[9px] text-[30px] leading-[36px] text-[#828282]">{kind}</p>
        <div className="mt-6 flex h-10 items-center text-[31px] leading-[40px] text-[#2f2f2f]">
          <StarIcon />
          <span className="ml-2">{rating}</span>
          <span className="mx-5 h-8 w-[3px] bg-[#828282]" />
          <ClockIcon />
          <span className="ml-2">{time}</span>
          <span className="mx-5 h-8 w-[3px] bg-[#828282]" />
          <SmallPin />
          <span className="ml-2">{distance}</span>
        </div>
      </div>
    </li>
  );
}

const RESTAURANTS = [1, 2, 3].map((id) => ({
  id,
  name: "Abella Bakery & Cake",
  kind: "Bakery shop",
  rating: "4.8",
  time: "10 Min",
  distance: "10 Min",
}));

const NAV = [
  {
    label: "Discover",
    icon: (
      <>
        <circle cx="25.5" cy="25.5" r="25.5" fill="currentColor" />
        <path d="M34.500 16L30.200 31L16 35L20.500 20Z" fill="#fff" stroke="#fff" strokeLinejoin="round" />
      </>
    ),
  },
  {
    label: "Order",
    icon: (
      <>
        <path d="M2 3L7 4Q8 4 8 6L10 34Q10.500 38 14 38H42Q45.500 38 46 34L49 17Q49 13 46 13H9M30 22H38" fill="none" stroke="currentColor" strokeWidth="3.500" strokeLinecap="round" strokeLinejoin="round" />
        <circle cx="12.500" cy="47" r="3.500" fill="currentColor" />
        <circle cx="41" cy="47" r="3.500" fill="currentColor" />
      </>
    ),
  },
  {
    label: "Favorite",
    icon: <path d="M25.500 5.500C17-1 2 2 2 19C2 31 13 41 25.500 49C38 41 49.500 31 49.500 19C49.500 2 34-1 25.500 5.500Z" fill="none" stroke="currentColor" strokeWidth="3.500" strokeLinejoin="round" />,
  },
  {
    label: "Profile",
    icon: (
      <>
        <circle cx="25.500" cy="14" r="12" fill="none" stroke="currentColor" strokeWidth="3.500" />
        <path d="M25.500 34C36 34 43.500 35 43.500 41.500C43.500 48 36 49 25.500 49C15 49 7.500 48 7.500 41.500C7.500 35 15 34 25.500 34Z" fill="none" stroke="currentColor" strokeWidth="3.500" />
      </>
    ),
  },
];

export default function App() {
  const [filter, setFilter] = useState("Nearest");
  const [tab, setTab] = useState("Discover");

  return (
    <div className="flex min-h-screen flex-col bg-[#f9f9f9] font-[Inter,'Liberation_Sans',sans-serif]">
      <section className="grid overflow-hidden">
        <div className="col-start-1 row-start-1">
          <CityMap />
        </div>
        <div className="relative col-start-1 row-start-1 flex flex-col items-start px-[42px] pt-[42px] pb-[92px]">
          <label className="flex h-[131px] w-full items-center gap-[29px] rounded-[26px] bg-white px-7 shadow-[0_1px_5px_rgba(0,0,0,0.2)]">
            <svg viewBox="0 0 56 56" className="size-14 shrink-0" aria-hidden="true">
              <path d="M25 2.500A22.500 22.500 0 1 1 25 47.500A22.500 22.500 0 1 1 25 2.500ZM42 42L52.500 53" fill="none" stroke="#ff5c5c" strokeWidth="5" strokeLinecap="round" />
            </svg>
            <span className="sr-only">Search</span>
            <input type="text" placeholder="Restaurant, food, etc..." className="min-w-0 flex-1 bg-transparent text-[38px] text-[#2f2f2f] outline-none placeholder:text-[#828282]" />
          </label>
          <div className="mt-[26px] flex gap-[26px]">
            {["Nearest", "Trending", "Best Seller"].map((name) => (
              <button
                key={name}
                type="button"
                aria-pressed={filter === name}
                onClick={() => setFilter(name)}
                className={`h-[84px] rounded-[26px] px-[26px] text-[33px] font-medium shadow-[0_1px_5px_rgba(0,0,0,0.2)] ${filter === name ? "bg-[#ff5c5c] text-white" : "bg-white text-[#f5605f]"}`}
              >
                {name}
              </button>
            ))}
          </div>
          <button type="button" aria-label="My location" className="mt-auto flex size-[147px] items-center justify-center self-end rounded-full bg-white text-[#383838] shadow-[0_6px_16px_rgba(0,0,0,0.25)]">
            <MdMyLocation className="size-16" />
          </button>
        </div>
      </section>

      <main className="relative -mt-[50px] flex-1 rounded-t-[50px] bg-[#f9f9f9] px-[42px] pt-[35px] pb-[5px] shadow-[0_0_30px_rgba(0,0,0,0.08)]">
        <div className="mx-auto h-[11px] w-[110px] rounded-full bg-[#d9d9d9]" />
        <h1 className="mt-8 text-[47px] leading-[56px] font-semibold text-[#2f2f2f]">Hello Ferry!</h1>
        <p className="mt-[15px] text-[38px] leading-[48px] text-[#828282]">Here are nearest restaurants for you</p>
        <ul className="mt-[50px] flex flex-col gap-[34px]">
          {RESTAURANTS.map(({ id, ...r }) => (
            <RestaurantCard key={id} {...r} />
          ))}
        </ul>
      </main>

      <nav className="sticky bottom-0 flex bg-white font-[Roboto,'Liberation_Sans',sans-serif] shadow-[0_-1px_6px_rgba(0,0,0,0.1)]">
        {NAV.map(({ label, icon }) => (
          <button
            key={label}
            type="button"
            aria-current={tab === label ? "page" : undefined}
            onClick={() => setTab(label)}
            className={`flex flex-1 flex-col items-center pt-[27px] pb-[18px] ${tab === label ? "text-[#ff5c5c]" : "text-[#828282]"}`}
          >
            <svg viewBox="0 0 51 51" className="size-[51px]" aria-hidden="true">
              {icon}
            </svg>
            <span className="mt-[13px] text-[33px] leading-[38px]">{label}</span>
          </button>
        ))}
      </nav>
    </div>
  );
}
